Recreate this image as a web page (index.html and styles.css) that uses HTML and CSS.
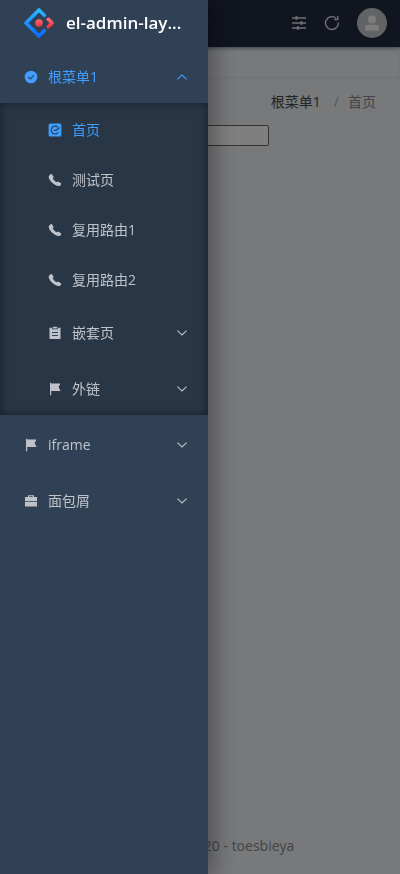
FILE: index.html
```
<!DOCTYPE html>
<html lang="zh-CN">
<head>
<meta charset="utf-8">
<meta name="viewport" content="width=device-width, initial-scale=1">
<title>el-admin-layout</title>
<link rel="stylesheet" href="styles.css">
</head>
<body>
<svg class="defs" aria-hidden="true">
  <symbol id="phone" viewBox="0 0 14 14"><path d="M1.300 2.200 3.700.8 5.700 4.200 4.700 5.600C5.600 7 7 8.400 8.400 9.200L10 8.500 13.400 10.600 12.500 12.400C11 13.500 9.200 13.100 7.300 12 4.300 10.300 2 7.900 1 5.500.6 4 .6 3 1.300 2.200Z"/></symbol>
  <symbol id="flag" viewBox="0 0 14 14"><path d="M2 .8H3.200V1.500H12.500L10.600 5 12.500 9H3.200V13.300H2Z"/></symbol>
  <symbol id="down" viewBox="0 0 12 12"><path d="M1.400 3.700 6 7.900 10.600 3.700" fill="none" stroke="currentColor" stroke-width="1.100"/></symbol>
</svg>
<div class="page">
  <header class="navbar">
    <button class="tool" aria-label="设置"><svg viewBox="0 0 16 16" width="16" height="16" fill="none" stroke="currentColor" stroke-width="1.300"><path d="M1 3H15M1 8H15M1 13H15"/><path d="M5.500 1.300V4.700M10.500 6.300V9.700M7 11.300V14.700" stroke-width="2.200"/></svg></button>
    <button class="tool" aria-label="刷新"><svg viewBox="0 0 16 16" width="16" height="16" fill="none" stroke="currentColor" stroke-width="1.400"><path d="M14.300 7.500A6.400 6.400 0 1 1 12.300 3.400"/><path d="M13.800 1V4.600H10.200"/></svg></button>
    <button class="avatar" aria-label="用户"><svg viewBox="0 0 16 16" width="16" height="16" fill="currentColor"><circle cx="8" cy="4.500" r="4"/><path d="M1 15.500V13Q1 9.800 4.200 9.800H11.800Q15 9.800 15 13V15.500Z"/></svg></button>
  </header>
  <div class="tags"></div>
  <main class="content">
    <nav class="crumbs" aria-label="面包屑"><a href="#">根菜单1</a><span class="slash">/</span><span>首页</span></nav>
    <input class="field" type="text" aria-label="输入">
  </main>
  <footer class="footer">Copyright © 2020 - toesbieya</footer>
</div>
<div class="mask"></div>
<aside class="drawer">
  <a class="logo" href="#">
    <svg viewBox="0 0 30 30" width="30" height="30" fill="none" stroke-width="3.600" stroke-linecap="round" stroke-linejoin="round">
      <defs>
        <linearGradient id="blue" x1="0" y1="0" x2="0" y2="1"><stop offset="0" stop-color="#29b6ff"/><stop offset="1" stop-color="#0b6cff"/></linearGradient>
        <linearGradient id="red" x1="0" y1="0" x2="0" y2="1"><stop offset="0" stop-color="#ff6b72"/><stop offset="1" stop-color="#f5323d"/></linearGradient>
      </defs>
      <path d="M20.300 7.300 15 2 2 15 15 28 20.300 22.700" stroke="url(#blue)"/>
      <path d="M24.300 11.300 28 15 24.300 18.700" stroke="url(#red)"/>
      <circle cx="15" cy="15" r="3.700" fill="url(#red)"/>
    </svg>
    <span class="title">el-admin-lay...</span>
  </a>
  <nav class="menu" aria-label="菜单">
    <a class="item active" href="#"><svg class="icon" viewBox="0 0 14 14"><circle cx="7" cy="7" r="6.300"/><path class="cut" d="M4.200 7 6.300 9 9.900 5.300"/></svg><span class="label">根菜单1</span><svg class="arrow up"><use href="#down"/></svg></a>
    <div class="submenu">
      <a class="item leaf active" href="#"><svg class="icon" viewBox="0 0 14 14"><rect x=".6" y=".6" width="12.800" height="12.800" rx="1.500"/><path class="cut" d="M9.800 4.300A3.900 3.900 0 1 0 10.300 9.300M5.800 7.300H8.200L11.600 4.500"/></svg><span class="label">首页</span></a>
      <a class="item leaf" href="#"><svg class="icon"><use href="#phone"/></svg><span class="label">测试页</span></a>
      <a class="item leaf" href="#"><svg class="icon"><use href="#phone"/></svg><span class="label">复用路由1</span></a>
      <a class="item leaf" href="#"><svg class="icon"><use href="#phone"/></svg><span class="label">复用路由2</span></a>
      <a class="item" href="#"><svg class="icon" viewBox="0 0 14 14"><path d="M1.500 1.800H4V3.300H10V1.800H12.500V13H1.500ZM4.800.8H9.200V2.500H4.800Z"/><path class="cut thin" d="M4 6.500H10M4 9.500H10"/></svg><span class="label">嵌套页</span><svg class="arrow"><use href="#down"/></svg></a>
      <a class="item" href="#"><svg class="icon"><use href="#flag"/></svg><span class="label">外链</span><svg class="arrow"><use href="#down"/></svg></a>
    </div>
    <a class="item" href="#"><svg class="icon"><use href="#flag"/></svg><span class="label">iframe</span><svg class="arrow"><use href="#down"/></svg></a>
    <a class="item" href="#"><svg class="icon" viewBox="0 0 14 14"><path fill-rule="evenodd" d="M4 3V1.200H10V3H13V7H1V3ZM5.200 3H8.800V2.200H5.200ZM1 7.800H13V12.500H1Z"/></svg><span class="label">面包屑</span><svg class="arrow"><use href="#down"/></svg></a>
  </nav>
</aside>
</body>
</html>
```
FILE: styles.css
```
* { box-sizing: border-box; }
body {
  margin: 0;
  font: 14px/20px "Open Sans", "Noto Sans CJK SC", sans-serif;
  color: #303133;
}
a { color: inherit; text-decoration: none; }
button { padding: 0; border: 0; background: none; }
.defs { position: absolute; width: 0; height: 0; }

.page {
  display: flex;
  flex-direction: column;
  min-height: 100vh;
  background: #f0f2f5;
}
.navbar {
  display: flex;
  align-items: center;
  justify-content: flex-end;
  gap: 17px;
  height: 47px;
  padding: 0 13px 1px 0;
  background: #222a3e;
  box-shadow: 0 1px 4px rgba(0, 21, 41, .5);
  z-index: 1;
}
.tool { display: flex; color: #e0e1e4; }
.avatar {
  display: grid;
  place-items: center;
  width: 30px;
  height: 30px;
  border-radius: 50%;
  background: #c4c6ca;
  color: #f8f8f8;
}
.tags {
  height: 32px;
  border-bottom: 1px solid #e6e8eb;
  box-shadow: inset 0 0 4px rgba(0, 0, 0, .06);
}
.content { flex: 1; padding: 13px 24px; }
.crumbs {
  display: flex;
  justify-content: flex-end;
  color: #86888e;
}
.crumbs a { color: #48494d; }
.slash { margin: 0 9px 0 13px; color: #a8abb2; }
.field {
  display: block;
  width: 245px;
  height: 21px;
  margin-top: 13px;
  border: 1px solid #666;
  border-radius: 2px;
  background: #fff;
}
.footer {
  padding: 18px 0;
  text-align: center;
  color: #86888e;
}

.mask {
  position: fixed;
  inset: 0;
  background: rgba(0, 0, 0, .5);
  z-index: 2;
}
.drawer {
  position: fixed;
  inset: 0 auto 0 0;
  width: 208px;
  background: #304156;
  color: #bfc3c9;
  box-shadow: 0 0 24px 4px rgba(0, 0, 0, .4);
  z-index: 3;
}
.logo {
  display: flex;
  align-items: center;
  gap: 12px;
  height: 46px;
  margin-bottom: 1px;
  padding: 0 20px 0 24px;
  color: #fff;
}
.logo svg { flex: none; }
.title {
  font-size: 17px;
  font-weight: 600;
  line-height: 28px;
  white-space: nowrap;
}
.item {
  display: flex;
  align-items: center;
  gap: 10px;
  height: 56px;
  padding: 4px 20px 0 24px;
}
.leaf { height: 50px; }
.active { color: #409eff; }
.label { flex: 1; }
.icon { width: 14px; height: 14px; fill: currentColor; }
.cut { fill: none; stroke: #304156; stroke-width: 1.2; }
.thin { stroke-width: 1; }
.arrow { width: 12px; height: 12px; }
.up { transform: rotate(180deg); }
.submenu {
  background: #283646;
  box-shadow: inset 0 0 8px rgba(0, 0, 0, .45);
}
.submenu .item { padding-left: 48px; }
```
